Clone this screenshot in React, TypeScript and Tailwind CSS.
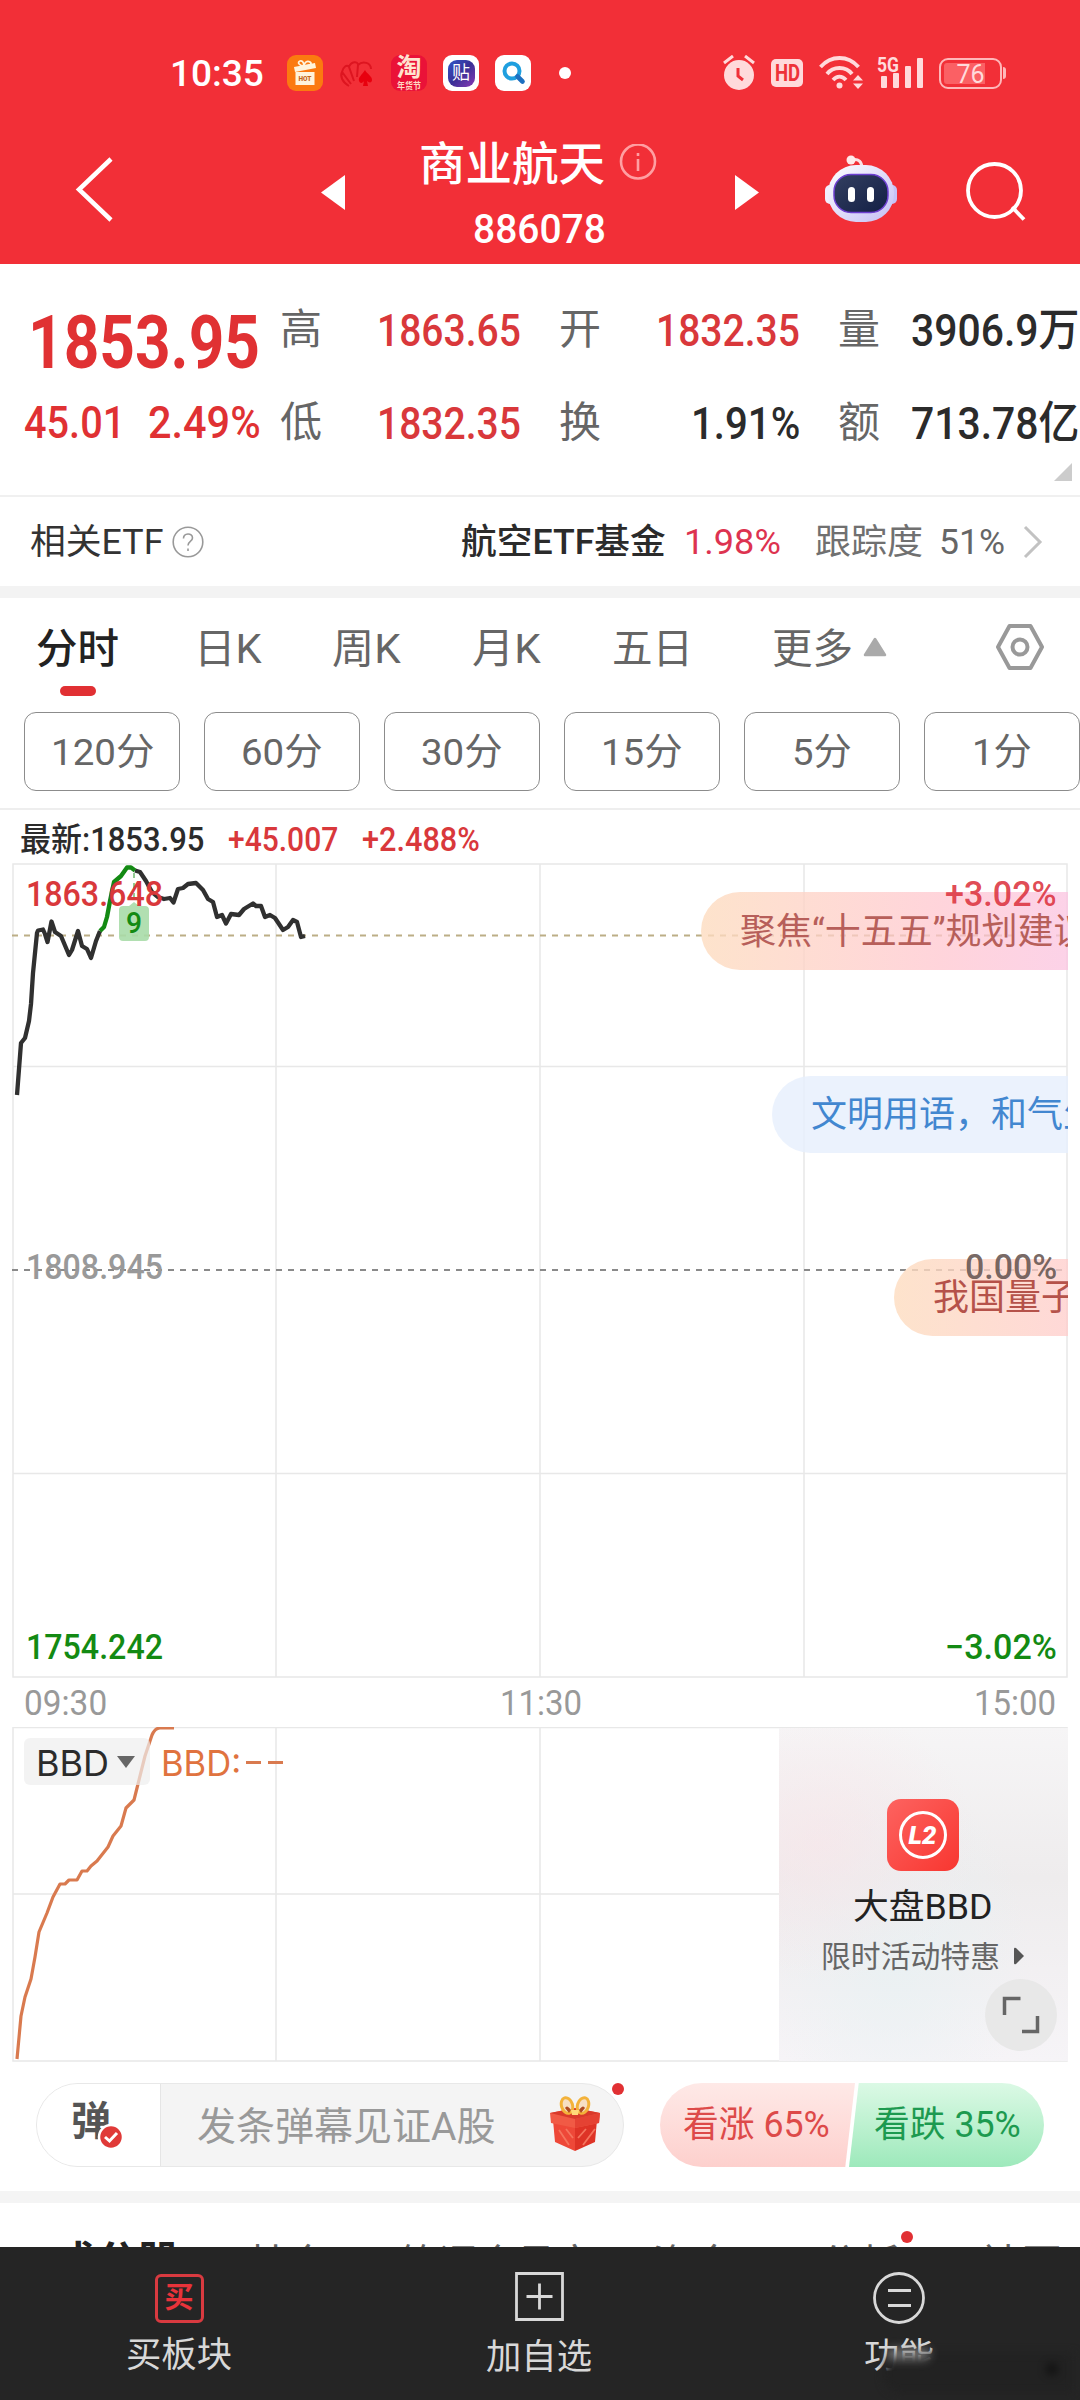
import React, { useLayoutEffect, useRef, useState } from "react";

const FONT = "font-['Roboto','Noto_Sans_CJK_SC',sans-serif]";

/** Single line of text condensed or widened so that it fills its box's width. */
function Fit({ className = "", children }: { className?: string; children: React.ReactNode }) {
  const outer = useRef<HTMLDivElement>(null);
  const inner = useRef<HTMLSpanElement>(null);
  const [scale, setScale] = useState(1);
  useLayoutEffect(() => {
    if (outer.current && inner.current) {
      setScale(outer.current.clientWidth / inner.current.offsetWidth);
    }
  }, []);
  return (
    <div ref={outer} className={`shrink-0 whitespace-nowrap ${className}`}>
      <span ref={inner} className="inline-block origin-left" style={{ transform: `translateY(1px) scaleX(${scale})` }}>
        {children}
      </span>
    </div>
  );
}

function StatusBar() {
  return (
    <div className="flex h-[146px] items-center pl-[170px] text-white">
      <Fit className="w-[94px] text-[37px] leading-[40px] font-medium">10:35</Fit>
      <div className="ml-[23px] flex items-center gap-4">
        <svg width="36" height="36" viewBox="0 0 36 36">
          <rect width="36" height="36" rx="9" fill="#fb7a10" />
          <path d="M7 12 L28 8 L29 13 L8 17Z" fill="#fff4dc" />
          <rect x="8.500" y="17" width="19" height="13" fill="#fff4dc" />
          <path d="M17 11c-5 0-7-4-4-5s4 3 4 5c0-3 3-6 6-4s-1 4-6 4" fill="none" stroke="#fff4dc" strokeWidth="1.800" />
          <text x="18" y="26" textAnchor="middle" fontSize="6.500" fontWeight="900" fontFamily="Roboto" fill="#c4661a">HOT</text>
        </svg>
        <svg width="36" height="36" viewBox="0 0 36 36" fill="none" stroke="#dd1520" strokeWidth="2">
          <path d="M10 31C3 27 1 21 3 17L12 29M3 17C4 12 8 9 10 12L15 26M10 12C12 6 19 6 19 10L18 22M19 10C24 5 32 8 32 14" />
          <path d="M26 15c-3 5-7 7-6 11c1 3 4 2 5 0l-1 5h5l-1-5c2 2 5 2 5-1c0-4-5-6-7-10z" fill="#e8000e" stroke="none" />
        </svg>
        <div className="flex h-9 w-9 flex-col items-center rounded-[9px] bg-[#ea1238]">
          <span className="h-[25px] text-[25px] leading-[25px] font-bold text-[#ffe3cf]">淘</span>
          <Fit className="w-6 text-center text-[9px] leading-[10px] font-bold text-[#ffd9c4]">年货节</Fit>
        </div>
        <div className="flex h-9 w-9 items-center justify-center rounded-[9px] bg-white">
          <div className="flex h-[27px] w-[27px] items-center justify-center rounded-[9px] bg-linear-to-br from-[#2a56c8] via-[#3a2f96] to-[#8a35b5] text-[18px] leading-none">贴</div>
        </div>
        <svg width="36" height="36" viewBox="0 0 36 36">
          <rect width="36" height="36" rx="9" fill="#fff" />
          <circle cx="17" cy="16" r="7.500" fill="none" stroke="#1f9fdf" strokeWidth="4" />
          <path d="M22.500 21.500L27.500 26.500" stroke="#1d6fc0" strokeWidth="4.600" strokeLinecap="round" />
        </svg>
      </div>
      <div className="ml-7 h-3 w-3 rounded-full bg-white" />
      <svg className="ml-[152px]" width="32" height="36" viewBox="0 0 32 36" fill="#ffdadb">
        <circle cx="16" cy="20" r="15" />
        <path d="M1 8L10 1M31 8L22 1" stroke="#ffdadb" strokeWidth="3" />
        <path d="M15 13V21L20 25" fill="none" stroke="#f03038" strokeWidth="3" />
      </svg>
      <div className="ml-4 flex h-7 w-8 items-center justify-center rounded-[5px] bg-[#ffdadb]">
        <Fit className="w-[25px] text-[23px] leading-7 font-bold text-[#ee3239]">HD</Fit>
      </div>
      <svg className="ml-4" width="45" height="36" viewBox="0 0 45 36" fill="none" stroke="#ffdadb" strokeWidth="3.800">
        <path d="M1.500 12C12 0 29 0 39.500 12M8 19C14 11 27 11 33 19M14 25C18 20.500 23 20.500 27 25" />
        <circle cx="20.500" cy="30.500" r="3" fill="#ffdadb" stroke="none" />
        <path d="M34 25.500L39 20L44 25.500zM34 28.500L39 34L44 28.500z" fill="#ffdadb" stroke="none" />
      </svg>
      <svg className="ml-[13px]" width="47" height="36" viewBox="0 0 47 36" fill="#ffdadb">
        <text x="0" y="16.500" fontSize="20" fontWeight="700" fontFamily="Roboto" textLength="22" lengthAdjust="spacingAndGlyphs">5G</text>
        <rect x="4" y="21" width="6" height="12" rx="1" />
        <rect x="16" y="18" width="6" height="15" rx="1" />
        <rect x="28" y="11" width="6" height="22" rx="1" />
        <rect x="40" y="3" width="6" height="30" rx="1" />
      </svg>
      <div className="ml-[15px] flex h-[31px] w-[63px] items-center justify-center rounded-[9px] border-2 border-[#ffb7b9] p-[3px]">
        <div className="flex h-full w-full items-center justify-center rounded-[3px] bg-linear-to-r from-[#fb6064] from-78% to-transparent to-78%">
          <Fit className="w-[28px] text-[25px] leading-[21px] text-[#ffdadb]">76</Fit>
        </div>
      </div>
      <div className="ml-px h-3 w-[3px] rounded-r bg-[#ffb7b9]" />
    </div>
  );
}

function TitleBar() {
  return (
    <div className="flex h-[118px] text-white">
      <svg className="mt-[10px] ml-[74px]" width="42" height="68" viewBox="0 0 42 68" fill="none" stroke="#fff" strokeWidth="4.500">
        <path d="M37 3L5 33.500L37 64" />
      </svg>
      <svg className="mt-[29px] ml-[205px]" width="24" height="35" viewBox="0 0 24 35"><path d="M24 0V35L0 17.500z" fill="#fff" /></svg>
      <div className="-mt-[10px] ml-[74px] w-[240px]">
        <div className="flex h-[54px] items-center">
          <Fit className="w-[186px] text-[46px] leading-[54px] font-medium">商业航天</Fit>
          <svg className="ml-[14px]" width="38" height="38" viewBox="0 0 38 38" fill="none" stroke="#ff9fa2" strokeWidth="2.600">
            <circle cx="19" cy="17.500" r="17" />
            <path d="M19 15V27M19 9V12" />
          </svg>
        </div>
        <Fit className="mt-[14px] ml-[54px] w-[133px] text-[41px] leading-[48px] font-medium">886078</Fit>
      </div>
      <svg className="mt-[29px] ml-[76px]" width="24" height="35" viewBox="0 0 24 35"><path d="M0 0V35L24 17.500z" fill="#fff" /></svg>
      <svg className="mt-[9px] ml-[65px]" width="74" height="68" viewBox="0 0 74 68">
        <defs>
          <linearGradient id="head" x1="0" y1="0" x2="1" y2="1">
            <stop offset="0" stopColor="#ffffff" />
            <stop offset="1" stopColor="#c3bef4" />
          </linearGradient>
          <linearGradient id="visor" x1="0" y1="0" x2="1" y2="1">
            <stop offset="0" stopColor="#333f60" />
            <stop offset="1" stopColor="#131f45" />
          </linearGradient>
        </defs>
        <path d="M27 5C35 3 38 7 38 14" fill="none" stroke="#fbdfe4" strokeWidth="3" />
        <circle cx="27" cy="5" r="4.500" fill="#ffe9ea" />
        <rect x="1" y="30" width="12" height="19" rx="5" fill="#f2eefd" />
        <rect x="61" y="30" width="12" height="19" rx="5" fill="#c6c2f7" />
        <rect x="4" y="10" width="66" height="57" rx="28" fill="url(#head)" />
        <rect x="10" y="19.500" width="54" height="38" rx="17" fill="url(#visor)" stroke="#6d3fd0" strokeWidth="1.500" />
        <rect x="24" y="32" width="7" height="15" rx="3.500" fill="#fff" />
        <rect x="43" y="32" width="7" height="15" rx="3.500" fill="#fff" />
      </svg>
      <svg className="mt-[15px] ml-[67px]" width="62" height="62" viewBox="0 0 62 62" fill="none" stroke="#fff" strokeWidth="3.800">
        <circle cx="29.500" cy="29.500" r="26.500" />
        <path d="M47 46L59 58.500" />
      </svg>
    </div>
  );
}

function Stat({ label, children }: { label: string; children: React.ReactNode }) {
  return (
    <div className="flex w-[241px] shrink-0 items-center justify-between">
      <span className="text-[42px] leading-[60px] text-[#666]">{label}</span>
      {children}
    </div>
  );
}

function Quote() {
  const value = "text-[45px] leading-[60px] font-medium";
  return (
    <div className="flex h-[231px] overflow-hidden">
      <div className="w-[280px] shrink-0 text-[#e03133]">
        <Fit className="mt-[37px] ml-[28px] h-20 w-[232px] text-[75px] leading-20 font-bold">1853.95</Fit>
        <div className="mt-[11px] ml-6 flex text-[44px] leading-[60px] font-medium">
          <Fit className="w-[101px]">45.01</Fit>
          <Fit className="ml-[23px] w-[113px]">2.49%</Fit>
        </div>
      </div>
      <div className="relative flex-1 pt-[19px]">
        <div className="flex h-[93px] items-center gap-[38px]">
          <Stat label="高"><Fit className={`w-[144px] text-[#d9383b] ${value}`}>1863.65</Fit></Stat>
          <Stat label="开"><Fit className={`w-[144px] text-[#d9383b] ${value}`}>1832.35</Fit></Stat>
          <Stat label="量"><Fit className={`w-[168px] text-[#2b2b2b] ${value}`}>3906.9万</Fit></Stat>
        </div>
        <div className="flex h-[93px] items-center gap-[38px]">
          <Stat label="低"><Fit className={`w-[144px] text-[#d9383b] ${value}`}>1832.35</Fit></Stat>
          <Stat label="换"><Fit className={`w-[109px] text-[#2b2b2b] ${value}`}>1.91%</Fit></Stat>
          <Stat label="额"><Fit className={`w-[168px] text-[#2b2b2b] ${value}`}>713.78亿</Fit></Stat>
        </div>
        <svg className="mt-[-6px] ml-[774px]" width="18" height="18" viewBox="0 0 18 18"><path d="M18 0V18H0z" fill="#ccc" /></svg>
      </div>
    </div>
  );
}

function EtfRow() {
  return (
    <div className="flex h-[91px] items-center border-t-2 border-[#f0f0f0] pl-[30px] text-[35px] leading-[50px]">
      <Fit className="w-[133px] text-[#333]">相关ETF</Fit>
      <svg className="ml-[9px]" width="32" height="32" viewBox="0 0 32 32" fill="none" stroke="#999" strokeWidth="1.600">
        <circle cx="16" cy="16" r="14.800" />
        <path d="M11.500 12.500C11.500 6.500 20.500 6.500 20.500 12C20.500 15.500 16 15.500 16 19.500M16 22.500V25" strokeWidth="1.600" />
      </svg>
      <Fit className="ml-[257px] w-[205px] font-medium text-[#2b2b2b]">航空ETF基金</Fit>
      <Fit className="ml-[18px] w-[97px] text-[#dd3350]">1.98%</Fit>
      <Fit className="ml-[34px] w-[108px] text-[#707070]">跟踪度</Fit>
      <Fit className="ml-4 w-[66px] text-[#666]">51%</Fit>
      <svg className="ml-[17px]" width="22" height="34" viewBox="0 0 22 34" fill="none" stroke="#c2c2c2" strokeWidth="3"><path d="M3 2L18 17L3 32" /></svg>
    </div>
  );
}

function Periods() {
  return (
    <>
      <div className="flex h-[114px] text-[41px] leading-[60px] text-[#666]">
        <div className="mt-[20px] ml-9 flex w-[83px] flex-col items-center">
          <Fit className="w-[83px] font-medium text-[#222]">分时</Fit>
          <div className="mt-[8px] h-[10px] w-9 rounded-full bg-[#e13033]" />
        </div>
        <Fit className="mt-[20px] ml-[75px] w-[68px]">日K</Fit>
        <Fit className="mt-[20px] ml-[70px] w-[69px]">周K</Fit>
        <Fit className="mt-[20px] ml-[71px] w-[69px]">月K</Fit>
        <Fit className="mt-[20px] ml-[71px] w-[81px]">五日</Fit>
        <Fit className="mt-[20px] ml-[79px] w-[81px]">更多</Fit>
        <svg className="mt-[39px] ml-[10px]" width="24" height="20" viewBox="0 0 24 20"><path d="M12 2L22 18H2z" fill="#aaa" stroke="#aaa" strokeWidth="2.500" strokeLinejoin="round" /></svg>
        <svg className="mt-[25px] ml-[108px]" width="50" height="48" viewBox="0 0 50 48" fill="none" stroke="#999" strokeWidth="4" strokeLinejoin="round">
          <path d="M14.500 3H35.500L47 24L35.500 45H14.500L3 24z" />
          <circle cx="25" cy="24" r="7.500" />
        </svg>
      </div>
      <div className="flex h-[98px] gap-6 overflow-hidden border-b-2 border-[#eee] pl-6 text-[37px] text-[#666]">
        <div className="flex h-[79px] w-[156px] shrink-0 items-center justify-center rounded-xl border border-[#8c8c8c]"><Fit className="w-[103px]">120分</Fit></div>
        <div className="flex h-[79px] w-[156px] shrink-0 items-center justify-center rounded-xl border border-[#8c8c8c]"><Fit className="w-[82px]">60分</Fit></div>
        <div className="flex h-[79px] w-[156px] shrink-0 items-center justify-center rounded-xl border border-[#8c8c8c]"><Fit className="w-[82px]">30分</Fit></div>
        <div className="flex h-[79px] w-[156px] shrink-0 items-center justify-center rounded-xl border border-[#8c8c8c]"><Fit className="w-[82px]">15分</Fit></div>
        <div className="flex h-[79px] w-[156px] shrink-0 items-center justify-center rounded-xl border border-[#8c8c8c]"><Fit className="w-[60px]">5分</Fit></div>
        <div className="flex h-[79px] w-[156px] shrink-0 items-center justify-center rounded-xl border border-[#8c8c8c]"><Fit className="w-[60px]">1分</Fit></div>
      </div>
    </>
  );
}

function PriceChart() {
  const label = "absolute text-[35px] leading-[40px] font-medium";
  return (
    <div className="relative mx-3 h-[815px] overflow-hidden">
      <svg className="block" width="1056" height="815" viewBox="12 863 1056 815" fill="none">
        <path d="M13 864H1067V1677H13zM276 864V1677M540 864V1677M804 864V1677M13 1066.500H1067M13 1473.500H1067" stroke="#e8e8e8" strokeWidth="1.500" />
        <path d="M12 935.500H1067" stroke="#bcae86" strokeWidth="2" strokeDasharray="6 6" />
        <path d="M12 1270H1067" stroke="#8a8a8a" strokeWidth="2" strokeDasharray="6 6" />
        <g strokeWidth="4.300" strokeLinejoin="round">
          <path d="M17 1095L21 1043L25 1038L29 1021L31 1004L33 973L37 933L38 930.500L43 929.500L45 934L47.500 942L51.500 921.500L55 932L61 936L69 955L72 950L78 931L82 946L87 949L91 958L96 941L100 931" stroke="#303030" />
          <path d="M135 870.500L140 872L146 881L152 892L158 897L164 899L170 898L173.500 902.500L178 889L183 888L188 884L196 883L203 890L208 899L213 902L217 917L222 915L226 923.500L231 914L239 915L244 909L253 903.500L256 906L261 906L265 917L270 915L275 918L283 930L288 927L293 920L297 922L301 937L305 936" stroke="#303030" />
          <path d="M100 931L104 927L107 917L110 901L114 882L121 876L127 867.500L131 867.500L135 870.500" stroke="#138a13" />
        </g>
        <path d="M134 873V900" stroke="#78bd78" strokeWidth="1.600" strokeDasharray="5 5" />
        <path d="M129 906L134 902L139 906H145Q149 906 149 910V937Q149 941 145 941H123Q119 941 119 937V910Q119 906 123 906z" fill="#a9dca9" fillOpacity=".9" />
      </svg>
      <div className="absolute top-[29px] left-[689px] h-[78px] w-[480px] rounded-full bg-linear-to-r from-[#fddcbf]/80 via-[#ffc6cf]/75 to-[#f8c4f0]/80 pl-[39px] text-[36px] leading-[80px] whitespace-nowrap text-[#b75f5a]">
        聚焦“十五五”规划建议
      </div>
      <div className="absolute top-[213px] left-[760px] h-[77px] w-[480px] rounded-full bg-[#e6effc]/80 pl-[39px] text-[36px] leading-[79px] whitespace-nowrap text-[#4287d0]">
        文明用语，和气生财
      </div>
      <div className="absolute top-[396px] left-[882px] h-[77px] w-[480px] rounded-full bg-linear-to-r from-[#fddcbf]/80 via-[#ffc6cf]/75 to-[#f8c4f0]/80 pl-[39px] text-[36px] leading-[79px] whitespace-nowrap text-[#b5524a]">
        我国量子
      </div>
      <Fit className={`${label} top-[11px] left-[14px] w-[137px] text-[#d9383b]`}>1863.648</Fit>
      <Fit className="absolute top-[41px] left-[114px] w-[16px] text-[30px] leading-[36px] font-medium text-[#138a13]">9</Fit>
      <Fit className={`${label} top-[384px] left-[14px] w-[137px] text-[#999]`}>1808.945</Fit>
      <Fit className={`${label} top-[764px] left-[14px] w-[137px] text-[#138a13]`}>1754.242</Fit>
      <Fit className={`${label} top-[11px] left-[933px] w-[112px] text-[#dc3440]/90`}>+3.02%</Fit>
      <Fit className={`${label} top-[384px] left-[953px] w-[92px] text-[#665551]/90`}>0.00%</Fit>
      <Fit className={`${label} top-[764px] left-[933px] w-[112px] text-[#138a13]`}>−3.02%</Fit>
    </div>
  );
}

function BbdChart() {
  return (
    <div className="relative mx-3 h-[335px]">
      <svg className="block" width="1056" height="335" viewBox="12 1727 1056 335" fill="none">
        <path d="M13 1727.500H1067V2061H13zM276 1728V2061M540 1728V2061M13 1894H1067" stroke="#e8e8e8" strokeWidth="1.500" />
        <path d="M17 2059L21 2016L25 1997L31 1979L35 1957L39 1932L47 1913L53 1897L60 1884L65 1884L69 1880L77 1880L82 1871L87 1871L91 1866L97 1861L108 1847L113 1836L121 1826L126 1808L134 1800L138 1784L145 1756L152 1735Q155 1728 160 1728H174" stroke="#d97a4f" strokeWidth="3.200" strokeLinejoin="round" />
      </svg>
      <div className="absolute top-[11px] left-3 flex h-[47px] w-[126px] items-center rounded-md bg-[#eeeeee]/70 pl-[12px]">
        <Fit className="w-[73px] font-[Inter] text-[35px] leading-[44px] text-[#2b2b2b]">BBD</Fit>
        <svg className="ml-[7px]" width="20" height="14" viewBox="0 0 20 14"><path d="M1 1H19L10 13z" fill="#666" /></svg>
      </div>
      <Fit className="absolute top-[13px] left-[149px] w-[80px] font-[Inter] text-[35px] leading-[44px] text-[#e0733f]">BBD:</Fit>
      <div className="absolute top-[34px] left-[234px] flex gap-[7px]">
        <div className="h-[3px] w-[15px] bg-[#d97a4f]" />
        <div className="h-[3px] w-[15px] bg-[#d97a4f]" />
      </div>
      <div className="absolute top-px right-0 flex h-[333px] w-[289px] flex-col items-center bg-linear-to-b from-[#f6f5f6] via-[#eeeced] via-45% to-[#f6f4f7]">
        <div className="absolute inset-0 bg-[radial-gradient(ellipse_at_15%_35%,#f9e4e899,transparent_45%),radial-gradient(ellipse_at_40%_68%,#e8f1f3cc,transparent_55%)]" />
        <svg className="relative mt-[71px] -ml-[2px]" width="72" height="72" viewBox="0 0 72 72">
          <defs>
            <linearGradient id="badge" x1="0" y1="0" x2="1" y2="1">
              <stop offset="0" stopColor="#fd6360" />
              <stop offset="1" stopColor="#f83630" />
            </linearGradient>
          </defs>
          <rect width="72" height="72" rx="14" fill="url(#badge)" />
          <circle cx="36" cy="36" r="22.500" fill="none" stroke="#fff" strokeWidth="3" />
          <text x="35.500" y="45" textAnchor="middle" fontSize="25" fontWeight="900" fontStyle="italic" fontFamily="Roboto" fill="#fff" textLength="28" lengthAdjust="spacingAndGlyphs">L2</text>
        </svg>
        <Fit className="relative mt-[14px] -ml-[2px] w-[140px] text-[35px] leading-[44px] text-[#222]">大盘BBD</Fit>
        <div className="relative mt-[7px] -ml-[3px] flex items-center">
          <Fit className="w-[179px] text-[30px] leading-[40px] text-[#666]">限时活动特惠</Fit>
          <svg className="ml-[14px]" width="10" height="18" viewBox="0 0 10 18"><path d="M0 2Q0 0 2 1L10 9L2 17Q0 18 0 16z" fill="#555" /></svg>
        </div>
      </div>
      <div className="absolute top-[252px] left-[973px] flex h-[72px] w-[72px] items-center justify-center rounded-full bg-[#e8e8e8]">
        <svg width="38" height="38" viewBox="0 0 38 38" fill="none" stroke="#666" strokeWidth="3.500"><path d="M2.500 19V2.500H18.500M35.500 20V35.500H20" /></svg>
      </div>
    </div>
  );
}

function CommentBar() {
  return (
    <div className="flex h-[129px] pt-[21px] pl-9">
      <div className="relative flex h-[84px] w-[588px] items-center rounded-full border border-[#e8e8e8] bg-[#f4f4f4]">
        <div className="relative h-full w-[124px] rounded-l-full border-r border-[#e5e5e5] bg-white">
          <span className="absolute top-[16px] left-[34px] text-[40px] leading-[44px] font-bold text-[#555]">弹</span>
          <svg className="absolute top-[39px] left-[60px]" width="28" height="28" viewBox="0 0 28 28" fill="none" stroke="#fff">
            <circle cx="14" cy="14" r="12" fill="#e03a38" strokeWidth="2.500" />
            <path d="M8 14L12.500 18L20 10" strokeWidth="3" />
          </svg>
        </div>
        <Fit className="ml-[36px] w-[298px] pt-[2px] text-[39px] leading-[60px] text-[#999]">发条弹幕见证A股</Fit>
        <svg className="-mt-[2px] ml-[54px]" width="52" height="56" viewBox="0 0 52 56">
          <path d="M4 24L26 28V55L6 46z" fill="#ee4838" />
          <path d="M48 24L26 28V55L46 46z" fill="#de3326" />
          <path d="M1 17L26 12L51 17L50 27L26 32L2 27z" fill="#f15a45" />
          <path d="M26 23L51 17L50 27L26 32z" fill="#e54233" />
          <path d="M1 17L26 23L51 17L26 12z" fill="#d93a2b" />
          <path d="M10 34L20 49M17 33L24 42M34 49L46 33M29 42L37 33" stroke="#f5745d" strokeWidth="1.800" />
          <ellipse cx="18" cy="9.500" rx="5.500" ry="8" transform="rotate(-18 18 9.500)" fill="#f7dfc4" stroke="#f3b23a" strokeWidth="3" />
          <ellipse cx="34" cy="9.500" rx="5.500" ry="8" transform="rotate(18 34 9.500)" fill="#f7dfc4" stroke="#f3b23a" strokeWidth="3" />
          <path d="M16 12Q18 8 22 14L20 17zM36 12Q34 8 30 14L32 17z" fill="#b04a22" />
          <path d="M22 14H30L29 19H23z" fill="#ffd979" />
        </svg>
        <div className="absolute -top-px -right-px h-3 w-3 rounded-full bg-[#e13033]" />
      </div>
      <div className="ml-[36px] flex h-[84px] w-[384px] text-[36px] leading-[83px]">
        <div className="h-full w-[195px] rounded-l-full bg-linear-to-b from-[#fee9e7] to-[#fdd0cd] pl-[23px] text-[#dd4a49] [clip-path:polygon(0_0,100%_0,95%_100%,0_100%)]">
          <Fit className="w-[147px]">看涨 65%</Fit>
        </div>
        <div className="-ml-[6px] h-full w-[195px] rounded-r-full bg-linear-to-b from-[#dbf9e5] to-[#9de9bb] pl-[25px] text-[#1d9a50] [clip-path:polygon(5%_0,100%_0,100%_100%,0_100%)]">
          <Fit className="w-[147px]">看跌 35%</Fit>
        </div>
      </div>
    </div>
  );
}

function BottomTabs() {
  return (
    <div className="relative flex h-[44px] overflow-hidden pt-[33px] text-[39px] leading-[48px] whitespace-nowrap text-[#666]">
      <Fit className="ml-[54px] w-[126px] font-bold text-[#222]">成分股</Fit>
      <Fit className="mt-[3px] ml-[66px] w-[82px]">基金</Fit>
      <Fit className="mt-[3px] ml-[71px] w-[196px]">简评会员文</Fit>
      <Fit className="mt-[3px] ml-[57px] w-[82px]">资金</Fit>
      <Fit className="mt-[3px] ml-[85px] w-[82px]">分析</Fit>
      <Fit className="mt-[3px] ml-[79px] w-[82px]">社区</Fit>
      <div className="absolute top-[28px] left-[901px] h-3 w-3 rounded-full bg-[#e13033]" />
    </div>
  );
}

function Toolbar() {
  return (
    <div className="relative flex h-[153px] overflow-hidden bg-[#252525] text-[35px] leading-[44px] text-[#d8d8d8]">
      <div className="-ml-[1px] flex w-[360px] flex-col items-center pt-[27px]">
        <div className="flex h-[49px] w-[49px] items-center justify-center rounded-md border-[3px] border-[#d93a40] text-[29px] leading-none font-bold text-[#e8333a]">买</div>
        <Fit className="mt-[10px] w-[106px]">买板块</Fit>
      </div>
      <div className="flex w-[360px] flex-col items-center pt-[25px]">
        <svg width="49" height="49" viewBox="0 0 49 49" fill="none" stroke="#d8d8d8" strokeWidth="2.800"><path d="M1.500 1.500H47.500V47.500H1.500zM24.500 11.500V37.500M11.500 24.500H37.500" /></svg>
        <Fit className="mt-[14px] w-[106px]">加自选</Fit>
      </div>
      <div className="flex w-[360px] flex-col items-center pt-[25px]">
        <svg width="52" height="52" viewBox="0 0 52 52" fill="none" stroke="#d8d8d8" strokeWidth="2.800"><circle cx="26" cy="26" r="24.500" /><path d="M15 18.500H38M15 33.500H38" /></svg>
        <Fit className="mt-[10px] w-[70px]">功能</Fit>
      </div>
      <div className="absolute top-[106px] left-[884px] h-[40px] w-[190px] rounded-l-2xl bg-[#222] blur-[4px]" />
      <div className="absolute top-[101px] left-[886px] h-3 w-11 rounded-full bg-[#c0c0c0]/50 blur-[5px]" />
      <div className="absolute top-[116px] left-[1046px] h-3 w-3 rounded-full bg-black/50 blur-[4px]" />
    </div>
  );
}

export default function App() {
  return (
    <div className={`h-[2400px] w-[1080px] overflow-hidden bg-white ${FONT}`}>
      <header className="h-[264px] bg-[#f22f37]">
        <StatusBar />
        <TitleBar />
      </header>
      <Quote />
      <EtfRow />
      <div className="h-3 bg-[#f3f3f3]" />
      <Periods />
      <div className="flex h-[53px] items-center pt-[4px] pl-5 text-[33px] leading-[48px] font-medium">
        <Fit className="w-[184px] text-[#2b2b2b]">最新:1853.95</Fit>
        <Fit className="ml-[24px] w-[110px] text-[#d9383b]">+45.007</Fit>
        <Fit className="ml-[24px] w-[118px] text-[#d9383b]">+2.488%</Fit>
      </div>
      <PriceChart />
      <div className="flex h-[49px] items-center pl-[24px] text-[35px] leading-[49px] text-[#999]">
        <Fit className="w-[83px]">09:30</Fit>
        <Fit className="ml-[393px] w-[82px]">11:30</Fit>
        <Fit className="ml-[392px] w-[82px]">15:00</Fit>
      </div>
      <BbdChart />
      <CommentBar />
      <div className="h-3 bg-[#f4f4f4]" />
      <BottomTabs />
      <Toolbar />
    </div>
  );
}
